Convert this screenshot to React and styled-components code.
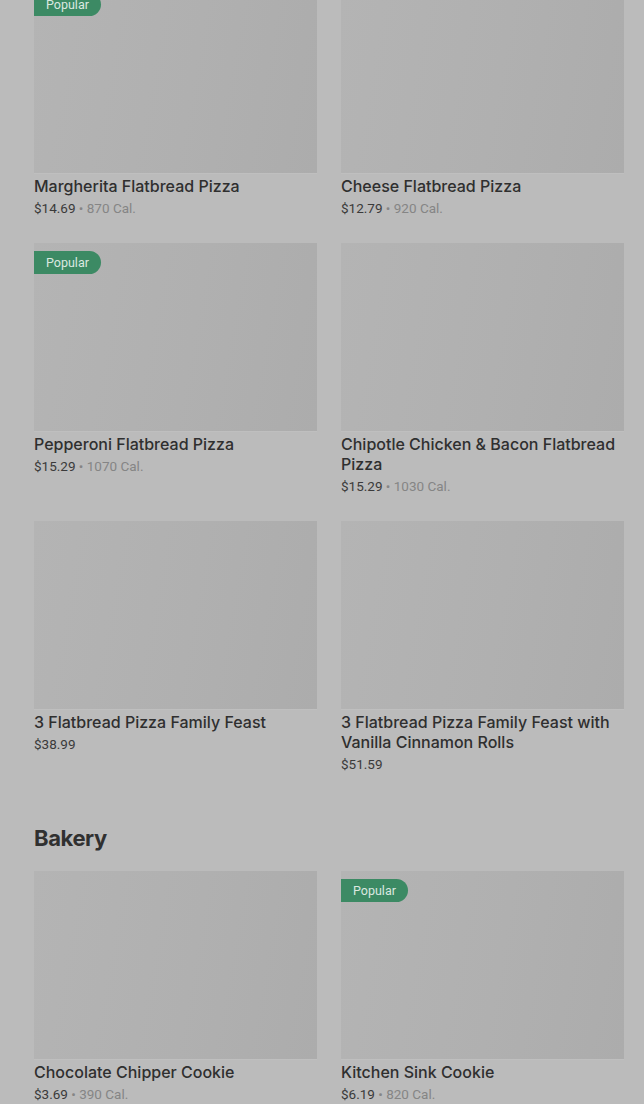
import React from 'react';
import styled, { createGlobalStyle } from 'styled-components';

const GlobalStyle = createGlobalStyle`
  html, body {
    margin: 0;
    padding: 0;
    background: #bbbbbb;
    font-family: Roboto, "Liberation Sans", sans-serif;
    overflow: hidden;
  }
`;

const Page = styled.main`
  margin-top: -15px;
  padding: 0 20px 0 34px;
`;

const Section = styled.section`
  margin-bottom: 50px;
`;

const Heading = styled.h2`
  margin: 0 0 19px;
  font-family: Inter, Roboto, sans-serif;
  font-size: 22px;
  line-height: 28px;
  font-weight: 700;
  color: #303030;
  letter-spacing: -0.4px;
`;

const Grid = styled.div`
  display: grid;
  grid-template-columns: 1fr 1fr;
  column-gap: 24px;
  row-gap: 25px;
`;

const Card = styled.div`
  display: flex;
  flex-direction: column;
`;

const Thumb = styled.div`
  position: relative;
  height: 188px;
  background: linear-gradient(100deg, #b4b4b4 0%, #b0b0b0 55%, #acacac 100%);
  box-shadow: 0 1px 0 #bfbfbf;
`;

const Badge = styled.span`
  position: absolute;
  top: 8px;
  left: 0;
  height: 23px;
  display: flex;
  align-items: center;
  padding: 0 12px;
  border-radius: 0 12px 12px 0;
  background: #3c8a64;
  color: #dbe8e0;
  font-size: 12.5px;
`;

const Title = styled.div`
  margin-top: 3px;
  font-family: Inter, Roboto, sans-serif;
  font-size: 16px;
  line-height: 20px;
  font-weight: 500;
  color: #2f2f2f;
`;

const Meta = styled.div`
  margin-top: 2px;
  font-size: 13.5px;
  line-height: 20px;
  color: #3a3a3a;
`;

const Cal = styled.span`
  color: #858585;
`;

const pizzas = [
  { name: 'Margherita Flatbread Pizza', price: '$14.69', cal: '870 Cal.', popular: true },
  { name: 'Cheese Flatbread Pizza', price: '$12.79', cal: '920 Cal.' },
  { name: 'Pepperoni Flatbread Pizza', price: '$15.29', cal: '1070 Cal.', popular: true },
  { name: 'Chipotle Chicken & Bacon Flatbread Pizza', price: '$15.29', cal: '1030 Cal.' },
  { name: '3 Flatbread Pizza Family Feast', price: '$38.99' },
  { name: '3 Flatbread Pizza Family Feast with Vanilla Cinnamon Rolls', price: '$51.59' },
];

const bakery = [
  { name: 'Chocolate Chipper Cookie', price: '$3.69', cal: '390 Cal.' },
  { name: 'Kitchen Sink Cookie', price: '$6.19', cal: '820 Cal.', popular: true },
];

const Item = ({ name, price, cal, popular }) => (
  <Card>
    <Thumb>{popular && <Badge>Popular</Badge>}</Thumb>
    <Title>{name}</Title>
    <Meta>
      {price}
      {cal && <Cal> • {cal}</Cal>}
    </Meta>
  </Card>
);

const App = () => (
  <Page>
    <GlobalStyle />
    <Section>
      <Grid>
        {pizzas.map((p) => <Item key={p.name} {...p} />)}
      </Grid>
    </Section>
    <Section>
      <Heading>Bakery</Heading>
      <Grid>
        {bakery.map((p) => <Item key={p.name} {...p} />)}
      </Grid>
    </Section>
  </Page>
);

export default App;
